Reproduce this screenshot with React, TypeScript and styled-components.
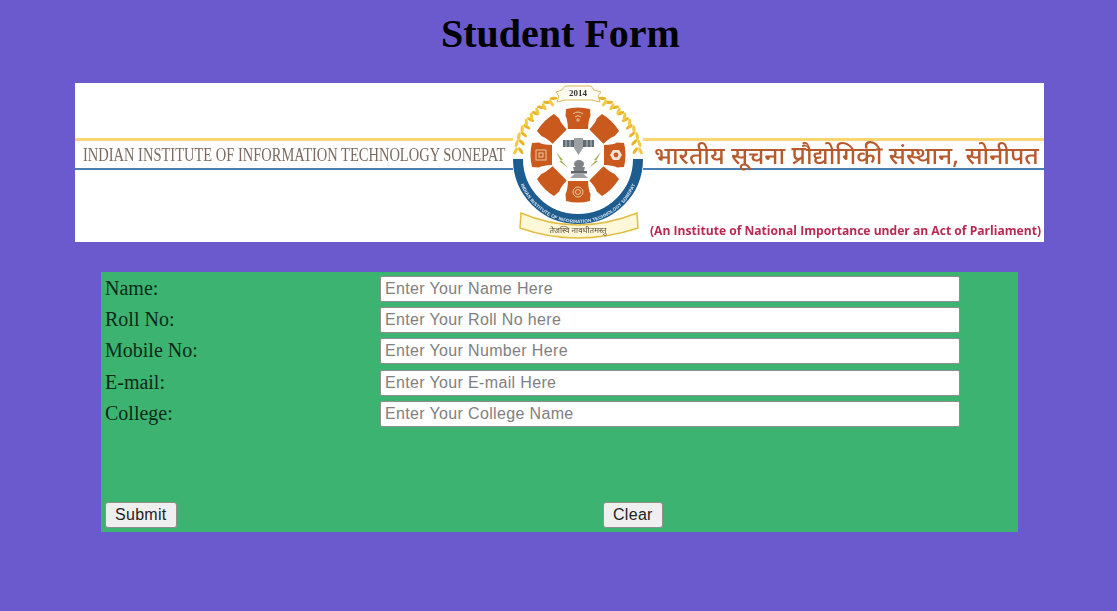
import React from "react";
import styled, { createGlobalStyle } from "styled-components";

const Global = createGlobalStyle`
  html, body { margin: 0; padding: 0; background: #6a5acd; }
  body { font-family: "Liberation Serif", "Times New Roman", serif; color: #000; }
`;

const Page = styled.div`
  width: 1117px;
  height: 611px;
  overflow: hidden;
  display: flex;
  flex-direction: column;
  background: #6a5acd;
`;

const Title = styled.h1`
  margin: 13px 0 0;
  height: 70px;
  padding-left: 4px;
  text-align: center;
  font-size: 40px;
  line-height: 42px;
  font-weight: 700;
  color: #000;
`;

const Banner = styled.div`
  margin-left: 75px;
  width: 969px;
  height: 159px;
  background: #fff;
  display: flex;
  filter: blur(0.35px);
`;

const Side = styled.div<{ $width: number }>`
  display: flex;
  flex-direction: column;
  flex: none;
  width: ${(p) => p.$width}px;
  padding-top: 55px;
`;

const Stripe = styled.div`
  box-sizing: border-box;
  height: 32px;
  border-top: 3px solid #fbd56f;
  border-bottom: 2px solid #4a7fb0;
  display: flex;
  align-items: center;
  white-space: nowrap;
`;

const EnglishName = styled.span`
  margin-left: 8px;
  display: inline-block;
  font-family: "Liberation Serif", serif;
  font-size: 19.5px;
  color: #7c6a5e;
  transform: scaleX(0.743);
  transform-origin: left center;
`;

const HindiName = styled.span`
  margin-left: 11px;
  font-family: "Noto Sans", "Noto Sans Devanagari", "Lohit Devanagari", sans-serif;
  font-size: 24.7px;
  font-weight: 500;
  line-height: 26px;
  color: #b8592c;
`;

const Caption = styled.div`
  margin-top: 53px;
  margin-left: 7px;
  font-family: "Open Sans", sans-serif;
  font-size: 12.1px;
  font-weight: 700;
  line-height: 16px;
  white-space: nowrap;
  color: #b92a52;
`;

const FormPanel = styled.form`
  margin: 30px 0 0 101px;
  width: 917px;
  height: 260px;
  box-sizing: border-box;
  padding: 4px 4px 4px;
  background: #3cb371;
  display: flex;
  flex-direction: column;
`;

const Row = styled.div`
  display: grid;
  grid-template-columns: 275px 580px;
  align-items: center;
  height: 26px;
  margin-bottom: 5.2px;
`;

const Label = styled.label`
  margin-top: -2px;
  font-size: 20px;
  line-height: 22px;
  color: #0b2a17;
`;

const Field = styled.input`
  box-sizing: border-box;
  width: 580px;
  height: 26px;
  padding: 1px 4px;
  border: 1px solid #8f8f8f;
  border-radius: 2px;
  background: #fff;
  font-family: "Liberation Sans", Arial, sans-serif;
  font-size: 16px;
  letter-spacing: 0.35px;
  &::placeholder { color: #808080; opacity: 1; }
`;

const Actions = styled.div`
  margin-top: auto;
  display: grid;
  grid-template-columns: 498px auto;
  justify-items: start;
`;

const Button = styled.button`
  height: 26px;
  padding: 0 9px;
  border: 1px solid #8f8f8f;
  border-radius: 3px;
  background: #efefef;
  font-family: "Liberation Sans", Arial, sans-serif;
  font-size: 16px;
  letter-spacing: 0.3px;
  color: #222;
`;

const Year = styled.text`
  font-family: "Liberation Serif", serif;
  font-size: 9px;
  font-weight: 700;
  fill: #333;
`;

const Motto = styled.text`
  font-family: "Noto Sans", "Noto Sans Devanagari", sans-serif;
  font-size: 8px;
  fill: #5b4a35;
`;

const RingLabel = styled.text`
  font-family: "Liberation Sans", sans-serif;
  font-size: 4.6px;
  font-weight: 700;
  letter-spacing: 0.15px;
  fill: #dfe9f2;
`;

const CX = 65;
const CY = 72;
const lobes = [0, 45, 90, 135, 180, 225, 270, 315];

const wheat = (side: number) =>
  Array.from({ length: 9 }, (_, i) => {
    const angle = 4 + i * 7.6;
    const a = (angle * Math.PI) / 180;
    const r = 60;
    return {
      key: i,
      x: CX - side * r * Math.cos(a),
      y: CY - r * Math.sin(a),
      deg: side > 0 ? 90 - angle : angle - 90,
    };
  });

function Logo() {
  return (
    <svg width="130" height="159" viewBox="0 0 130 159" style={{ flex: "none" }}>
      <defs>
        <path id="ringText" d="M 3 78 A 62 62 0 0 0 127 78" fill="none" />
      </defs>
      {[1, -1].map((s) =>
        wheat(s).map((g) => (
          <g key={`${s}-${g.key}`} transform={`translate(${g.x} ${g.y}) rotate(${g.deg})`}>
            <ellipse cx="0" cy="-2.6" rx="3.9" ry="1.6" fill="#e8b52a" transform={`rotate(${s * -30} 0 -2.6)`} />
            <ellipse cx="0" cy="2.6" rx="3.9" ry="1.6" fill="#f2c93f" transform={`rotate(${s * 30} 0 2.6)`} />
          </g>
        ))
      )}
      <path d="M 5 76 A 60 60 0 0 0 125 76" fill="none" stroke="#1d5c8f" strokeWidth="10" />
      <RingLabel>
        <textPath href="#ringText" startOffset="50%" textAnchor="middle">
          INDIAN INSTITUTE OF INFORMATION TECHNOLOGY SONEPAT
        </textPath>
      </RingLabel>
      {lobes.map((d) => (
        <path
          key={d}
          transform={`rotate(${d} ${CX} ${CY})`}
          d={`M ${CX - 10} ${CY - 26} L ${CX + 10} ${CY - 26} Q ${CX + 10.5} ${CY - 36} ${CX + 12.5} ${CY - 39} L ${CX + 12} ${CY - 46} Q ${CX} ${CY - 49} ${CX - 12} ${CY - 46} L ${CX - 12.5} ${CY - 39} Q ${CX - 10.5} ${CY - 36} ${CX - 10} ${CY - 26} Z`}
          fill="#c9591d"
        />
      ))}
      <g fill="none" stroke="#e9c9a8" strokeWidth="1">
        <path d="M 60 31 Q 65 27 70 31 M 62 34 Q 65 31 68 34" />
        <circle cx="65" cy="37" r="1.2" />
        <circle cx="65" cy="109" r="5" />
        <circle cx="65" cy="109" r="2.5" />
        <rect x="23" y="67" width="10" height="10" />
        <rect x="26" y="70" width="4" height="4" />
      </g>
      <path d="M 109 72 L 106 77 L 100 77 L 97 72 L 100 67 L 106 67 Z" fill="#f1e3d6" />
      <circle cx="103" cy="72" r="2.4" fill="#c9591d" />
      <g>
        <rect x="50" y="57" width="11" height="7" fill="#5f6b72" />
        <rect x="70" y="57" width="11" height="7" fill="#5f6b72" />
        <path d="M 61 55 H 70 V 65 L 65.5 72 L 61 65 Z" fill="#9aa0a4" />
        <path d="M 53 57 V 64 M 57 57 V 64 M 74 57 V 64 M 78 57 V 64" stroke="#d7dadb" strokeWidth="0.8" />
      </g>
      <path d="M 43 69 L 50 77 L 48 77 L 55 85 L 46 78 L 48 78 Z" fill="#a6ad58" />
      <path d="M 88 69 L 81 77 L 83 77 L 76 85 L 85 78 L 83 78 Z" fill="#a6ad58" />
      <g fill="#7d8386">
        <ellipse cx="66" cy="81" rx="5" ry="4" />
        <path d="M 60 84 H 72 L 71 88 H 61 Z" />
        <rect x="58" y="88" width="16" height="2.5" fill="#5e6468" />
        <path d="M 62 90.5 H 70 L 75 95 H 57 Z" fill="#9ca2a5" />
      </g>
      <path d="M 43 9 L 49 7 L 52 3 L 78 3 L 81 7 L 88 9 L 85 13 L 87 19 L 79 17 L 52 17 L 44 19 L 46 13 Z" fill="#fffdf3" stroke="#d9b95a" strokeWidth="1" />
      <Year x="65" y="13" textAnchor="middle">2014</Year>
      <path d="M 8 130 Q 36 142 65 142 Q 94 142 124 130 L 125 145 Q 95 155 65 155 Q 35 155 7 145 Z" fill="#fff8d8" stroke="#e2bd45" strokeWidth="1.5" />
      <Motto x="65" y="150" textAnchor="middle">तेजस्वि नावधीतमस्तु</Motto>
    </svg>
  );
}

const fields = [
  ["Name:", "Enter Your Name Here"],
  ["Roll No:", "Enter Your Roll No here"],
  ["Mobile No:", "Enter Your Number Here"],
  ["E-mail:", "Enter Your E-mail Here"],
  ["College:", "Enter Your College Name"],
];

export default function App() {
  return (
    <Page>
      <Global />
      <Title>Student Form</Title>
      <Banner>
        <Side $width={438}>
          <Stripe>
            <EnglishName>INDIAN INSTITUTE OF INFORMATION TECHNOLOGY SONEPAT</EnglishName>
          </Stripe>
        </Side>
        <Logo />
        <Side $width={401}>
          <Stripe>
            <HindiName>भारतीय सूचना प्रौद्योगिकी संस्थान, सोनीपत</HindiName>
          </Stripe>
          <Caption>(An Institute of National Importance under an Act of Parliament)</Caption>
        </Side>
      </Banner>
      <FormPanel onSubmit={(e) => e.preventDefault()}>
        {fields.map(([label, placeholder]) => (
          <Row key={label}>
            <Label>{label}</Label>
            <Field placeholder={placeholder} />
          </Row>
        ))}
        <Actions>
          <Button type="submit">Submit</Button>
          <Button type="reset">Clear</Button>
        </Actions>
      </FormPanel>
    </Page>
  );
}
